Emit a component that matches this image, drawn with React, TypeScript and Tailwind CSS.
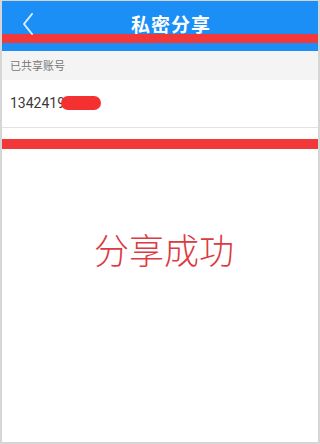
import React from 'react';

const App = () => {
  return (
    <div className="w-[320px] h-[444px] bg-white border-x-2 border-b-2 border-t border-[#d6d6d6] overflow-hidden flex flex-col" style={{ fontFamily: '"Noto Sans CJK SC", "Noto Sans", sans-serif' }}>
      <div className="bg-[#1b8ff5] h-[50px] flex flex-col shrink-0">
        <div className="h-[33px] relative flex items-center justify-center">
          <svg className="absolute left-[20px] top-[12px]" width="12" height="22" viewBox="0 0 12 22" fill="none">
            <path d="M10 1 L2 11 L10 21" stroke="#dbeeff" strokeWidth="2" strokeLinecap="round" strokeLinejoin="round" />
          </svg>
          <span className="text-white text-[19px] font-bold leading-none mt-[12px] ml-[22px] tracking-[1px]">私密分享</span>
        </div>
        <div className="h-[9px] bg-[#f23838]" />
      </div>
      <div className="h-[29px] bg-[#f4f4f4] flex items-center px-[8px] text-[11px] text-[#777] shrink-0">已共享账号</div>
      <div className="h-[48px] flex items-center px-[8px] border-b border-[#e2e2e2] shrink-0">
        <div className="relative text-[14px] text-[#3a3a3a]" style={{ fontFamily: 'Roboto, sans-serif' }}>
          1342419
          <span className="absolute left-[51px] top-[3px] w-[40px] h-[14px] rounded-full bg-[#f43030]" />
        </div>
      </div>
      <div className="h-[11px] shrink-0" />
      <div className="h-[10px] bg-[#f23838] shrink-0" />
      <div className="flex-1 flex justify-center pt-[82px]">
        <span className="text-[35px] font-light text-[#dd3a42] leading-none ml-[8px]">分享成功</span>
      </div>
    </div>
  );
};

export default App;
